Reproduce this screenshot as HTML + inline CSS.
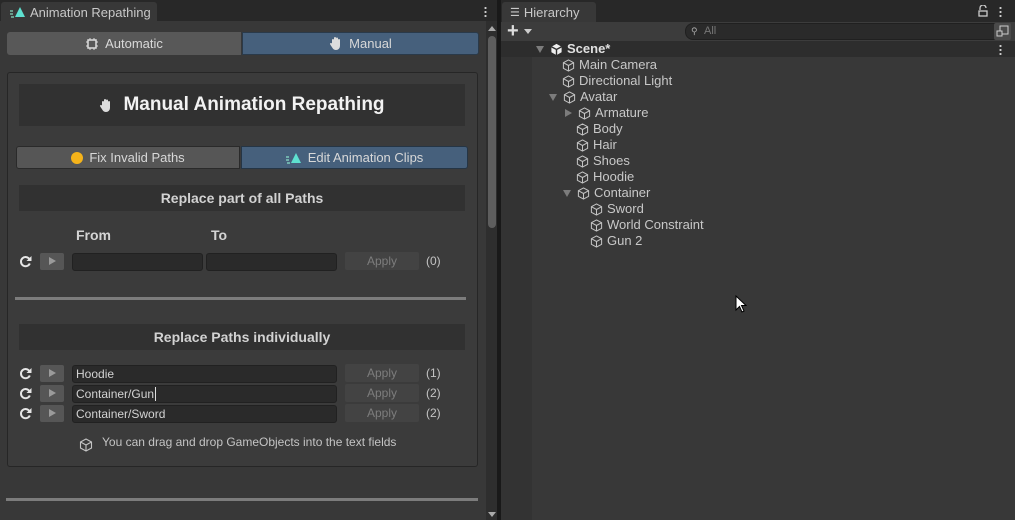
<!DOCTYPE html>
<html><head><meta charset="utf-8"><style>
*{margin:0;padding:0;box-sizing:border-box}
body{width:1015px;height:520px;background:#191919;font-family:"Liberation Sans",sans-serif;font-size:12px;color:#c4c4c4;position:relative;overflow:hidden}
.a{position:absolute}
.btn{position:absolute;display:flex;align-items:center;justify-content:center;gap:6px;color:#d8d8d8;font-size:12px}
.hdr{position:absolute;background:#313131;color:#d2d2d2;font-weight:bold;font-size:14px;display:flex;align-items:center;justify-content:center}
.fld{position:absolute;background:#2a2a2a;border:1px solid #212121;border-radius:3px;height:18px;color:#d2d2d2;padding-left:3px;line-height:16px;font-size:12px}
.play{position:absolute;width:24px;height:17px;background:#565656;border-radius:2px}
.play:after{content:"";position:absolute;left:9px;top:4px;border-left:7px solid #9a9a9a;border-top:4.5px solid transparent;border-bottom:4.5px solid transparent}
.apply{position:absolute;width:74px;height:18px;background:#434343;border-radius:2px;color:#7d7d7d;text-align:center;line-height:18px}
.cnt{position:absolute;color:#c4c4c4}
.ref{position:absolute}
.h{position:absolute;height:16px;line-height:16px;display:flex;align-items:center;gap:4px;color:#c8c8c8;font-size:13px}
.tri{width:0;height:0;border-left:4.5px solid transparent;border-right:4.5px solid transparent;border-top:7px solid #7c7c7c;margin-right:2px}
.trir{width:0;height:0;border-top:4.5px solid transparent;border-bottom:4.5px solid transparent;border-left:7px solid #7c7c7c;margin-right:2px}
</style></head><body>
<!-- left panel -->
<div class="a" style="left:0;top:0;width:497px;height:21px;background:#282828"></div>
<div class="a" style="left:1px;top:2px;width:156px;height:20px;background:#383838;border-radius:3px 3px 0 0;display:flex;align-items:center;padding-left:9px;gap:4px;color:#c8c8c8;font-size:13px">
<svg width="16" height="12" viewBox="0 0 16 12"><path d="M0 5h3M0 8h3M1 11h3" stroke="#9fd" stroke-width="1"/><path d="M10 1L15 11H5Z" fill="#5ee0d0"/></svg>Animation Repathing</div>
<div class="a" style="left:484px;top:6px;width:3px;height:12px;background:radial-gradient(circle,#ccc 1px,transparent 1.2px) 0 0/3px 4px"></div>
<div class="a" style="left:0;top:21px;width:497px;height:499px;background:#383838"></div>
<div class="a" style="left:486px;top:21px;width:11px;height:499px;background:#2e2e2e"></div>
<div class="a" style="left:488px;top:26px;border-left:4px solid transparent;border-right:4px solid transparent;border-bottom:5px solid #aaa"></div>
<div class="a" style="left:488px;top:36px;width:8px;height:192px;background:#5e5e5e;border-radius:4px"></div>
<div class="a" style="left:488px;top:512px;border-left:4px solid transparent;border-right:4px solid transparent;border-top:5px solid #aaa"></div>
<div class="a" style="left:497px;top:0;width:4px;height:520px;background:#191919"></div>

<div class="btn" style="left:7px;top:32px;width:234px;height:23px;background:#585858;border-radius:3px 0 0 3px;font-size:13px">
<svg width="14" height="14" viewBox="0 0 14 14"><rect x="3" y="3" width="8" height="8" fill="none" stroke="#ddd" stroke-width="1.5"/><path d="M5 1v2M9 1v2M5 11v2M9 11v2M1 5h2M1 9h2M11 5h2M11 9h2" stroke="#ddd"/></svg>Automatic</div>
<div class="btn" style="left:242px;top:32px;width:237px;height:23px;background:#46607c;border:1px solid #2a3a4a;border-radius:0 3px 3px 0;font-size:13px">
<svg width="14" height="15" viewBox="0 0 14 15"><path d="M3 8V4a1 1 0 0 1 2 0V7V2a1 1 0 0 1 2 0V7V2.5a1 1 0 0 1 2 0V7V4a1 1 0 0 1 2 0V10a4 4 0 0 1-4 4H7A4 4 0 0 1 3.5 12L1.2 8.5a1 1 0 0 1 1.6-1.2Z" fill="#ddd"/></svg>Manual</div>

<div class="a" style="left:7px;top:72px;width:471px;height:395px;background:#3b3b3b;border:1px solid #262626;border-radius:3px"></div>
<div class="hdr" style="left:19px;top:84px;width:446px;height:42px;font-size:19px;color:#f2f2f2;gap:10px"><svg width="14" height="15" viewBox="0 0 14 15"><path d="M3 8V4a1 1 0 0 1 2 0V7V2a1 1 0 0 1 2 0V7V2.5a1 1 0 0 1 2 0V7V4a1 1 0 0 1 2 0V10a4 4 0 0 1-4 4H7A4 4 0 0 1 3.5 12L1.2 8.5a1 1 0 0 1 1.6-1.2Z" fill="#ddd"/></svg>Manual Animation Repathing</div>

<div class="btn" style="left:16px;top:146px;width:224px;height:23px;background:#565656;border:1px solid #2a2a2a;border-radius:3px 0 0 3px;font-size:13px"><span style="width:12px;height:12px;border-radius:50%;background:#f5b31a;display:inline-block"></span>Fix Invalid Paths</div>
<div class="btn" style="left:241px;top:146px;width:227px;height:23px;background:#46607c;border:1px solid #253545;border-radius:0 3px 3px 0;font-size:13px">
<svg width="16" height="12" viewBox="0 0 16 12"><path d="M0 5h3M0 8h3M1 11h3" stroke="#9fd" stroke-width="1"/><path d="M10 1L15 11H5Z" fill="#5ee0d0"/></svg>Edit Animation Clips</div>

<div class="hdr" style="left:19px;top:185px;width:446px;height:26px">Replace part of all Paths</div>
<div class="a" style="left:76px;top:227px;font-weight:bold;font-size:14px;color:#d4d4d4">From</div>
<div class="a" style="left:211px;top:227px;font-weight:bold;font-size:14px;color:#d4d4d4">To</div>

<svg class="ref" style="left:19px;top:255px" width="13" height="13" viewBox="0 0 13 13"><path d="M10.5 4.2A4.6 4.6 0 1 0 10.8 8.5" fill="none" stroke="#e6e6e6" stroke-width="2"/><path d="M12.5 1V6H7.5Z" fill="#e6e6e6"/></svg>
<div class="play" style="left:40px;top:253px"></div>
<div class="fld" style="left:72px;top:253px;width:131px"></div>
<div class="fld" style="left:206px;top:253px;width:131px"></div>
<div class="apply" style="left:345px;top:252px">Apply</div>
<div class="cnt" style="left:426px;top:254px">(0)</div>

<div class="a" style="left:15px;top:297px;width:451px;height:3px;background:#7c7c7c"></div>
<div class="hdr" style="left:19px;top:324px;width:446px;height:26px">Replace Paths individually</div>

<svg class="ref" style="left:19px;top:367px" width="13" height="13" viewBox="0 0 13 13"><path d="M10.5 4.2A4.6 4.6 0 1 0 10.8 8.5" fill="none" stroke="#e6e6e6" stroke-width="2"/><path d="M12.5 1V6H7.5Z" fill="#e6e6e6"/></svg>
<div class="play" style="left:40px;top:365px"></div>
<div class="fld" style="left:72px;top:365px;width:265px">Hoodie</div>
<div class="apply" style="left:345px;top:364px">Apply</div>
<div class="cnt" style="left:426px;top:366px">(1)</div>

<svg class="ref" style="left:19px;top:387px" width="13" height="13" viewBox="0 0 13 13"><path d="M10.5 4.2A4.6 4.6 0 1 0 10.8 8.5" fill="none" stroke="#e6e6e6" stroke-width="2"/><path d="M12.5 1V6H7.5Z" fill="#e6e6e6"/></svg>
<div class="play" style="left:40px;top:385px"></div>
<div class="fld" style="left:72px;top:385px;width:265px">Container/Gun<span style="border-left:1px solid #ddd;margin-left:1px"></span></div>
<div class="apply" style="left:345px;top:384px">Apply</div>
<div class="cnt" style="left:426px;top:386px">(2)</div>

<svg class="ref" style="left:19px;top:407px" width="13" height="13" viewBox="0 0 13 13"><path d="M10.5 4.2A4.6 4.6 0 1 0 10.8 8.5" fill="none" stroke="#e6e6e6" stroke-width="2"/><path d="M12.5 1V6H7.5Z" fill="#e6e6e6"/></svg>
<div class="play" style="left:40px;top:405px"></div>
<div class="fld" style="left:72px;top:405px;width:265px">Container/Sword</div>
<div class="apply" style="left:345px;top:404px">Apply</div>
<div class="cnt" style="left:426px;top:406px">(2)</div>

<svg class="a" style="left:79px;top:438px" width="14" height="14" viewBox="0 0 14 14"><path d="M7 1L12.5 4V10L7 13L1.5 10V4Z M1.5 4L7 7L12.5 4 M7 7V13" fill="none" stroke="#c4c4c4" stroke-width="1.1"/></svg>
<div class="a" style="left:102px;top:435px;color:#c4c4c4">You can drag and drop GameObjects into the text fields</div>
<div class="a" style="left:6px;top:498px;width:472px;height:3px;background:#7c7c7c"></div>

<!-- hierarchy -->
<div class="a" style="left:501px;top:0;width:514px;height:22px;background:#282828"></div>
<div class="a" style="left:502px;top:2px;width:94px;height:20px;background:#383838;border-radius:3px 3px 0 0;display:flex;align-items:center;padding-left:8px;gap:4px;color:#c8c8c8;font-size:13px"><span style="font-size:11px">☰</span>Hierarchy</div>
<svg class="a" style="left:978px;top:5px" width="10" height="12" viewBox="0 0 10 12"><path d="M2 5V3a3 3 0 0 1 6 0" fill="none" stroke="#ccc" stroke-width="1.3"/><rect x="1" y="6" width="8" height="5" fill="none" stroke="#ccc" stroke-width="1.3"/></svg>
<div class="a" style="left:999px;top:6px;width:3px;height:12px;background:radial-gradient(circle,#ccc 1px,transparent 1.2px) 0 0/3px 4px"></div>
<div class="a" style="left:501px;top:22px;width:514px;height:19px;background:#3c3c3c"></div>
<div class="a" style="left:507px;top:20px;font-size:20px;color:#ddd;font-weight:bold">+</div>
<div class="a" style="left:524px;top:29px;border-left:4px solid transparent;border-right:4px solid transparent;border-top:5px solid #ccc"></div>
<div class="a" style="left:685px;top:23px;width:311px;height:17px;background:#2a2a2a;border:1px solid #202020;border-radius:8px 0 0 8px;color:#777;padding-left:18px;line-height:15px;font-size:11px">All</div>
<div class="a" style="left:691px;top:26px;color:#aaa;font-size:9px">⚲</div>
<div class="a" style="left:994px;top:23px;width:17px;height:17px;background:#4a4a4a;border-radius:2px"></div>
<svg class="a" style="left:996px;top:25px" width="13" height="13" viewBox="0 0 13 13"><rect x="4" y="1" width="8" height="8" fill="none" stroke="#ccc"/><rect x="1" y="6" width="5" height="5" fill="#4a4a4a" stroke="#ccc"/></svg>
<div class="a" style="left:501px;top:41px;width:514px;height:479px;background:#383838"></div>
<div class="a" style="left:501px;top:57px;width:31px;height:463px;background:#333"></div>
<div class="a" style="left:501px;top:41px;width:514px;height:16px;background:#2d2d2d"></div>
<div class="a" style="left:999px;top:44px;width:3px;height:12px;background:radial-gradient(circle,#ccc 1px,transparent 1.2px) 0 0/3px 4px"></div>

<div class="h" style="left:536px;top:41px;font-weight:bold;color:#e0e0e0"><span class="tri"></span><svg width="13" height="13" viewBox="0 0 14 14"><path d="M7 1L12.5 4V10L7 13L1.5 10V4Z" fill="#eee"/><path d="M1.5 4L7 7L12.5 4M7 7V13" stroke="#2d2d2d" stroke-width="1.5" fill="none"/></svg>Scene*</div>
<svg class="a" style="left:735px;top:295px" width="12" height="19" viewBox="0 0 12 19"><path d="M1 1V15L4.5 11.5L7 17L9 16L6.5 10.5H11Z" fill="#fff" stroke="#000" stroke-width="1"/></svg>
<div class="h" style="left:562px;top:57px"><svg width="13" height="13" viewBox="0 0 14 14"><path d="M7 1L12.5 4V10L7 13L1.5 10V4Z M1.5 4L7 7L12.5 4 M7 7V13" fill="none" stroke="#c4c4c4" stroke-width="1.1"/></svg>Main Camera</div>
<div class="h" style="left:562px;top:73px"><svg width="13" height="13" viewBox="0 0 14 14"><path d="M7 1L12.5 4V10L7 13L1.5 10V4Z M1.5 4L7 7L12.5 4 M7 7V13" fill="none" stroke="#c4c4c4" stroke-width="1.1"/></svg>Directional Light</div>
<div class="h" style="left:549px;top:89px"><span class="tri"></span><svg width="13" height="13" viewBox="0 0 14 14"><path d="M7 1L12.5 4V10L7 13L1.5 10V4Z M1.5 4L7 7L12.5 4 M7 7V13" fill="none" stroke="#c4c4c4" stroke-width="1.1"/></svg>Avatar</div>
<div class="h" style="left:565px;top:105px"><span class="trir"></span><svg width="13" height="13" viewBox="0 0 14 14"><path d="M7 1L12.5 4V10L7 13L1.5 10V4Z M1.5 4L7 7L12.5 4 M7 7V13" fill="none" stroke="#c4c4c4" stroke-width="1.1"/></svg>Armature</div>
<div class="h" style="left:576px;top:121px"><svg width="13" height="13" viewBox="0 0 14 14"><path d="M7 1L12.5 4V10L7 13L1.5 10V4Z M1.5 4L7 7L12.5 4 M7 7V13" fill="none" stroke="#c4c4c4" stroke-width="1.1"/></svg>Body</div>
<div class="h" style="left:576px;top:137px"><svg width="13" height="13" viewBox="0 0 14 14"><path d="M7 1L12.5 4V10L7 13L1.5 10V4Z M1.5 4L7 7L12.5 4 M7 7V13" fill="none" stroke="#c4c4c4" stroke-width="1.1"/></svg>Hair</div>
<div class="h" style="left:576px;top:153px"><svg width="13" height="13" viewBox="0 0 14 14"><path d="M7 1L12.5 4V10L7 13L1.5 10V4Z M1.5 4L7 7L12.5 4 M7 7V13" fill="none" stroke="#c4c4c4" stroke-width="1.1"/></svg>Shoes</div>
<div class="h" style="left:576px;top:169px"><svg width="13" height="13" viewBox="0 0 14 14"><path d="M7 1L12.5 4V10L7 13L1.5 10V4Z M1.5 4L7 7L12.5 4 M7 7V13" fill="none" stroke="#c4c4c4" stroke-width="1.1"/></svg>Hoodie</div>
<div class="h" style="left:563px;top:185px"><span class="tri"></span><svg width="13" height="13" viewBox="0 0 14 14"><path d="M7 1L12.5 4V10L7 13L1.5 10V4Z M1.5 4L7 7L12.5 4 M7 7V13" fill="none" stroke="#c4c4c4" stroke-width="1.1"/></svg>Container</div>
<div class="h" style="left:590px;top:201px"><svg width="13" height="13" viewBox="0 0 14 14"><path d="M7 1L12.5 4V10L7 13L1.5 10V4Z M1.5 4L7 7L12.5 4 M7 7V13" fill="none" stroke="#c4c4c4" stroke-width="1.1"/></svg>Sword</div>
<div class="h" style="left:590px;top:217px"><svg width="13" height="13" viewBox="0 0 14 14"><path d="M7 1L12.5 4V10L7 13L1.5 10V4Z M1.5 4L7 7L12.5 4 M7 7V13" fill="none" stroke="#c4c4c4" stroke-width="1.1"/></svg>World Constraint</div>
<div class="h" style="left:590px;top:233px"><svg width="13" height="13" viewBox="0 0 14 14"><path d="M7 1L12.5 4V10L7 13L1.5 10V4Z M1.5 4L7 7L12.5 4 M7 7V13" fill="none" stroke="#c4c4c4" stroke-width="1.1"/></svg>Gun 2</div>
</body></html>
